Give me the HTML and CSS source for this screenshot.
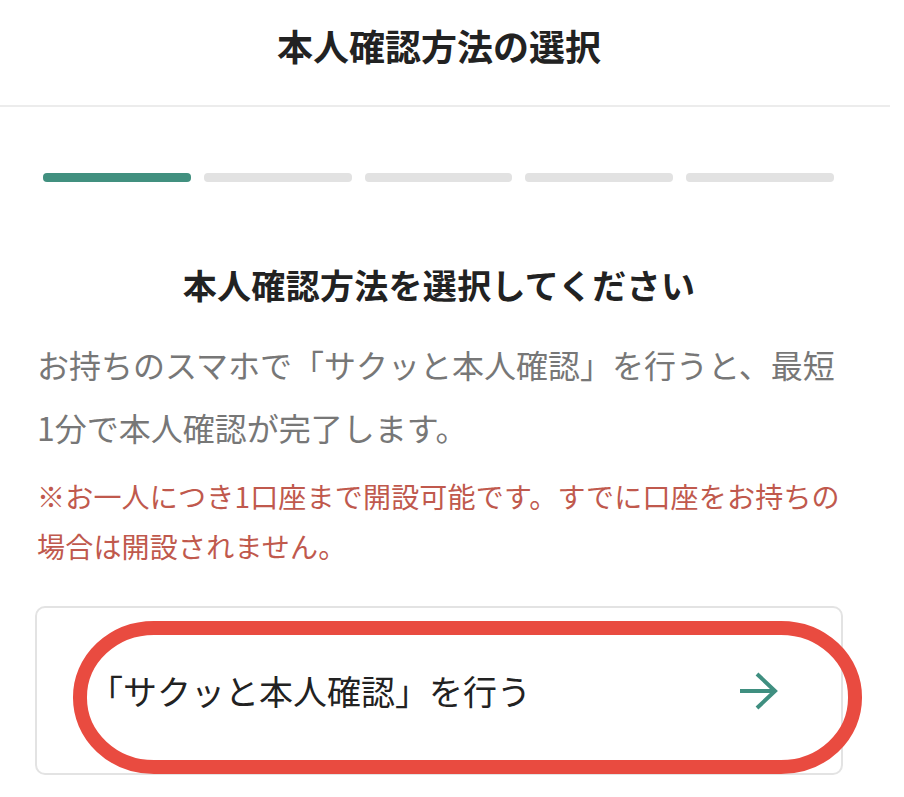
FILE: index.html
```html
<!DOCTYPE html>
<html lang="ja">
<head>
  <meta charset="UTF-8">
  <meta name="viewport" content="width=device-width, initial-scale=1.0">
  <title>本人確認方法の選択</title>
  <link rel="stylesheet" href="styles.css">
</head>
<body>
  <div class="app">
    <!-- Шапка -->
    <header class="header">
      <h1 class="header-title">本人確認方法の選択</h1>
    </header>

    <main class="content">
      <!-- Шаги -->
      <div class="steps">
        <span class="step step-active"></span>
        <span class="step"></span>
        <span class="step"></span>
        <span class="step"></span>
        <span class="step"></span>
      </div>

      <h2 class="lead">本人確認方法を選択してください</h2>
      <p class="desc">お持ちのスマホで「サクッと本人確認」を行うと、最短1分で本人確認が完了します。</p>
      <p class="note">※お一人につき1口座まで開設可能です。すでに口座をお持ちの場合は開設されません。</p>

      <!-- Карточка выбора -->
      <a class="option-card" href="#">
        <span class="option-label">「サクッと本人確認」を行う</span>
        <svg class="option-arrow" width="40" height="40" viewBox="0 0 40 40">
          <path d="M2 20 H37 M19 3 L37 20 L19 37" fill="none" stroke="#3f8f80" stroke-width="4"/>
        </svg>
        <svg class="mark" width="790" height="153" viewBox="0 0 790 153">
          <rect x="7" y="7" width="775" height="139" rx="74" ry="69" fill="none" stroke="#e94b40" stroke-width="14"/>
        </svg>
      </a>
    </main>
  </div>
</body>
</html>
```

FILE: styles.css
```css
/* Базовые стили */
body {
  margin: 0;
  background: #fff;
  font-family: "Noto Sans CJK JP", "Noto Sans", sans-serif;
  color: #222;
}

.app {
  width: 890px;
}

/* Шапка */
.header {
  height: 105px;
  border-bottom: 2px solid #ececec;
  display: flex;
  align-items: center;
  justify-content: center;
}

.header-title {
  margin: 0 12px 16px 0;
  font-size: 36px;
  font-weight: 700;
  line-height: 50px;
}

/* Контент */
.content {
  width: 808px;
  margin-left: 35px;
}

/* Шаги */
.steps {
  display: flex;
  gap: 13px;
  margin: 66px 9px 0 8px;
}

.step {
  flex: 1;
  height: 9px;
  border-radius: 4px;
  background: #e2e2e2;
}

.step-active {
  background: #41907f;
}

.lead {
  margin: 79px 0 0;
  text-align: center;
  font-size: 34px;
  font-weight: 700;
  line-height: 48px;
  letter-spacing: 0.3px;
}

.desc {
  margin: 24px 0 0 2px;
  font-size: 32px;
  line-height: 63px;
  color: #777;
}

.note {
  margin: 12px 0 0 2px;
  font-size: 28px;
  line-height: 50px;
  letter-spacing: 0.2px;
  color: #c0594d;
}

/* Карточка */
.option-card {
  position: relative;
  margin-top: 35px;
  height: 165px;
  border: 2px solid #e3e3e3;
  border-radius: 10px;
  display: flex;
  align-items: center;
  justify-content: space-between;
  padding: 0 63px 0 52px;
  color: #222;
  text-decoration: none;
}

.option-label {
  font-size: 34px;
  line-height: 48px;
}

.option-arrow {
  display: block;
}

/* Красная обводка поверх карточки */
.mark {
  position: absolute;
  left: 36px;
  top: 13px;
  overflow: visible;
}
```
